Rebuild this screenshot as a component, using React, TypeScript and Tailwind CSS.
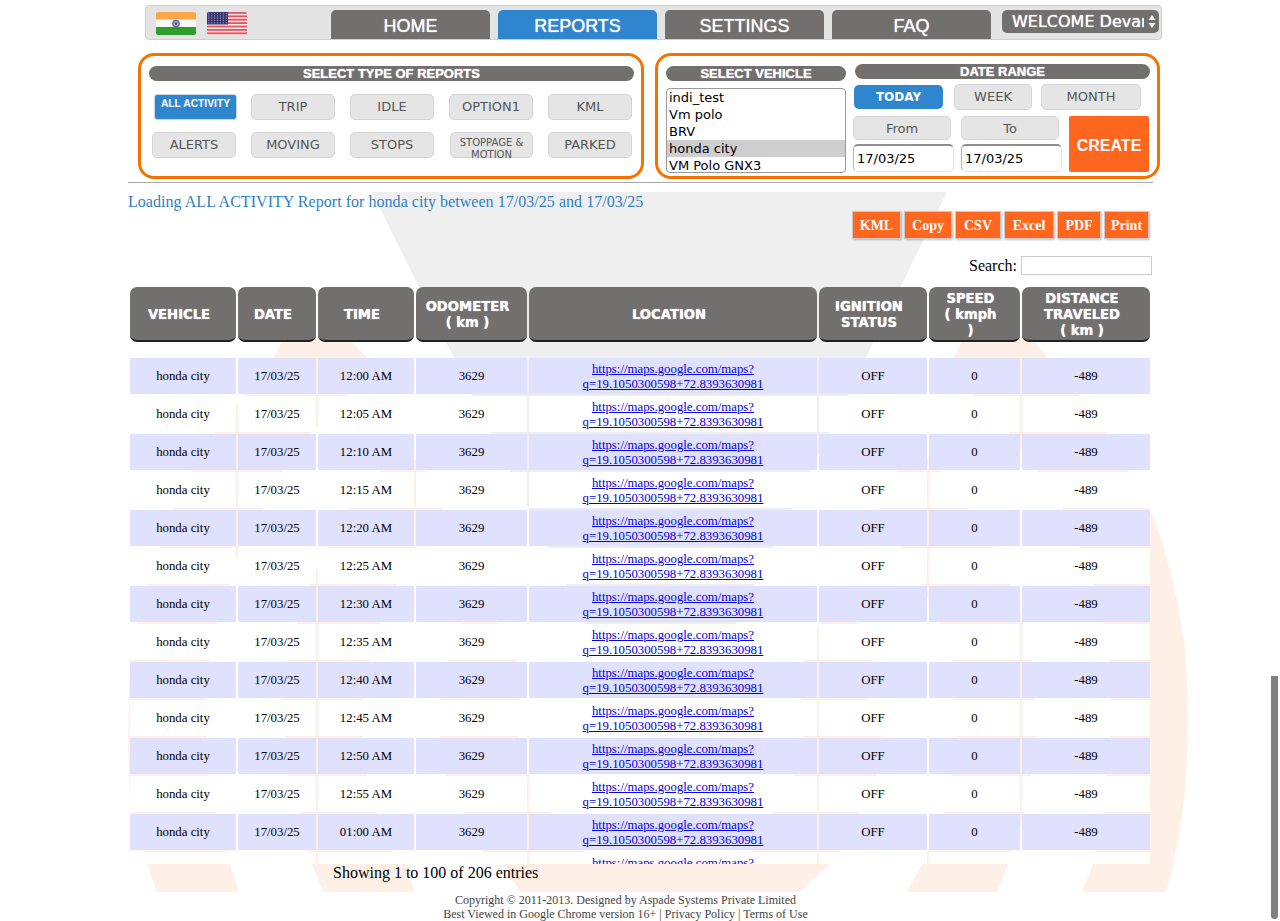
import React from "react";

// ── Table data ────────────────────────────────────────────────
const TIMES = [
  "12:00 AM", "12:05 AM", "12:10 AM", "12:15 AM", "12:20 AM", "12:25 AM", "12:30 AM",
  "12:35 AM", "12:40 AM", "12:45 AM", "12:50 AM", "12:55 AM", "01:00 AM", "01:05 AM",
];

const COLUMNS = [
  { label: ["VEHICLE"], width: "w-[106px]" },
  { label: ["DATE"], width: "w-[78px]" },
  { label: ["TIME"], width: "w-[96px]" },
  { label: ["ODOMETER", "( km )"], width: "w-[111px]" },
  { label: ["LOCATION"], width: "w-[288px]" },
  { label: ["IGNITION", "STATUS"], width: "w-[108px]" },
  { label: ["SPEED", "( kmph", ")"], width: "w-[91px]" },
  { label: ["DISTANCE", "TRAVELED", "( km )"], width: "w-[128px]" },
];

const REPORT_TYPES = [
  ["ALL ACTIVITY", "TRIP", "IDLE", "OPTION1", "KML"],
  ["ALERTS", "MOVING", "STOPS", "STOPPAGE & MOTION", "PARKED"],
];

const VEHICLES = ["indi_test", "Vm polo", "BRV", "honda city", "VM Polo GNX3"];
const EXPORTS = [
  { label: "KML", width: "w-[49px]" },
  { label: "Copy", width: "w-[48px]" },
  { label: "CSV", width: "w-[46px]" },
  { label: "Excel", width: "w-[50px]" },
  { label: "PDF", width: "w-[44px]" },
  { label: "Print", width: "w-[45px]" },
];

// ── Watermark logo behind the page ────────────────────────────
function Watermark() {
  return (
    <svg className="absolute inset-0 w-[1280px] h-[921px]" viewBox="0 0 1280 921" aria-hidden="true">
      <polygon fill="#efefef" points="372,192 947,192 735,625 586,625" />
      <g fill="#fef0e6">
        <polygon points="285,336 345,336 368,358 347,394 312,432 283,470 263,508 240,546 230,584 218,622 210,660 207,698 207,736 208,774 217,812 227,850 230,864 239,892 157,892 147,864 130,812 128,740 130,660 138,622 147,584 160,546 173,508 192,470 215,432 245,394 273,358" />
        <polygon points="405,450 425,470 443,508 417,546 397,584 380,622 370,660 363,698 363,736 367,774 377,812 392,850 405,864 415,892 323,892 312,864 307,850 300,812 288,774 285,736 283,698 287,660 297,622 310,584 327,546 350,508 381,470" />
        <polygon points="480,608 497,622 517,660 520,698 518,736 527,774 550,812 580,850 600,858 740,858 753,850 772,812 795,774 803,736 802,698 803,660 820,622 840,608 857,622 873,660 867,698 882,736 877,774 860,812 840,850 830,864 800,892 520,892 503,864 480,850 463,812 445,774 440,736 440,698 448,660 463,622" />
        <polygon points="918,450 940,470 968,508 993,546 1010,584 1023,622 1032,660 1037,736 1025,812 1008,864 997,892 907,892 922,864 945,812 958,736 952,660 940,622 920,584 900,546 878,508 897,470" />
        <polygon points="965,336 1030,336 1043,352 1078,394 1107,432 1128,470 1150,510 1160,535 1170,570 1178,605 1184,640 1187,680 1188,720 1187,760 1184,800 1178,840 1172,870 1166,892 1082,892 1093,864 1103,812 1110,736 1110,660 1103,622 1093,584 1078,546 1062,508 1037,470 1008,432 973,394 953,358" />
      </g>
    </svg>
  );
}

// ── Flags ─────────────────────────────────────────────────────
function IndiaFlag() {
  return (
    <svg width="40" height="23" viewBox="0 0 40 23" className="rounded-[2px] shrink-0">
      <rect width="40" height="8" fill="#fba748" />
      <rect y="7.5" width="40" height="8" fill="#f8f8f8" />
      <rect y="15" width="40" height="8" fill="#2f9e2c" />
      <circle cx="20" cy="11.5" r="3.4" fill="#9a9ac0" stroke="#5a5a96" strokeWidth="1" />
      <circle cx="20" cy="11.5" r="1" fill="#4a4a88" />
    </svg>
  );
}

function UsaFlag() {
  const stripes = [0, 1, 2, 3, 4, 5, 6];
  const dots: number[][] = [];
  for (let y = 0; y < 5; y++) for (let x = 0; x < 7; x++) dots.push([x, y]);
  return (
    <svg width="40" height="23" viewBox="0 0 40 23" className="rounded-[2px] shrink-0">
      <rect width="40" height="23" fill="#fbeaea" />
      {stripes.map((s) => (
        <rect key={s} y={s * 3.4} width="40" height="1.8" fill="#e8505c" />
      ))}
      <rect width="21" height="12.5" fill="#34346f" />
      {dots.map(([x, y]) => (
        <circle key={`${x}-${y}`} cx={1.8 + x * 2.9} cy={1.6 + y * 2.3} r="0.6" fill="#b4b4d4" />
      ))}
    </svg>
  );
}

// ── Small pieces ──────────────────────────────────────────────
function TitleBar({ children, className }: { children: React.ReactNode; className: string }) {
  return (
    <div
      className={`h-[15px] rounded-full bg-[#726f6f] text-white text-center text-[13px] font-bold leading-[15px] [font-family:'Liberation_Sans',sans-serif] [text-shadow:0_0_1px_#fff] ${className}`}
    >
      {children}
    </div>
  );
}

function NavTab({ label, active }: { label: string; active?: boolean }) {
  return (
    <button
      className={`w-[159px] h-[29px] rounded-t-[5px] text-white text-[18px] leading-[33px] text-center [font-family:'Liberation_Sans',sans-serif] [text-shadow:0_0_1px_#fff] ${
        active ? "bg-[#2f86cf]" : "bg-[#726f6f]"
      }`}
    >
      {label}
    </button>
  );
}

function GrayButton({ label, className }: { label: string; className: string }) {
  return (
    <button
      className={`block rounded-[5px] bg-[#e5e5e5] border border-[#d4d4d4] text-[#555] text-[13px] [font-family:'DejaVu_Sans',sans-serif] ${className}`}
    >
      {label}
    </button>
  );
}

export default function App() {
  return (
    <div className="relative w-[1280px] h-[921px] overflow-hidden bg-white">
      <Watermark />

      <div className="relative w-[1024px] mx-auto pt-[5px]">
        {/* ── Top nav ── */}
        <nav className="ml-[17px] w-[1017px] h-[35px] rounded-[4px] bg-[#e4e4e4] border border-[#cfcfcf] flex items-start">
          <div className="flex gap-[11px] ml-[10px] mt-[6px]">
            <IndiaFlag />
            <UsaFlag />
          </div>
          <div className="flex gap-[8px] ml-[84px] mt-[4px]">
            <NavTab label="HOME" />
            <NavTab label="REPORTS" active />
            <NavTab label="SETTINGS" />
            <NavTab label="FAQ" />
          </div>
          <div className="ml-[11px] mt-[4px] w-[157px] h-[23px] rounded-[5px] bg-[#726f6f] flex items-center pl-[10px] pr-[2px]">
            <span className="w-[132px] shrink-0 overflow-hidden whitespace-nowrap text-white text-[16px] leading-[25px] [font-family:'DejaVu_Sans',sans-serif] [text-shadow:0_0_1px_#fff]">
              WELCOME Devan
            </span>
            <svg width="10" height="15" viewBox="0 0 10 15" className="ml-[3px] shrink-0">
              <path d="M5 1 L8.5 6 H1.5 Z M5 14 L8.5 9 H1.5 Z" fill="#fff" />
            </svg>
          </div>
        </nav>

        {/* ── Filter panels ── */}
        <div className="flex gap-[11px] ml-[10px] mt-[13px]">
          <section className="shrink-0 w-[506px] h-[126px] rounded-[16px] border-[3px] border-[#f57200] pt-[10px] pl-[8px] pr-[7px]">
            <TitleBar className="w-full">SELECT TYPE OF REPORTS</TitleBar>
            <div className="grid grid-cols-[repeat(5,84px)] gap-x-[15px] gap-y-[12px] ml-[3px] mt-[13px]">
              {REPORT_TYPES.flat().map((label) => {
                if (label === "ALL ACTIVITY") {
                  return (
                    <button
                      key={label}
                      className="h-[26px] ml-[2px] w-[83px] rounded-[3px] bg-[#2f86cf] border border-[#c9d9e6] pb-[6px] text-white text-[10.3px] font-bold leading-[14px] [font-family:'Liberation_Sans',sans-serif]"
                    >
                      {label}
                    </button>
                  );
                }
                if (label === "STOPPAGE & MOTION") {
                  return (
                    <GrayButton
                      key={label}
                      label={label}
                      className="h-[26px] ml-[1px] !text-[10px] leading-[12px] px-[6px] pt-[4px]"
                    />
                  );
                }
                return <GrayButton key={label} label={label} className="h-[26px]" />;
              })}
            </div>
          </section>

          <section className="shrink-0 w-[505px] h-[126px] rounded-[16px] border-[3px] border-[#f57200] flex pl-[8px]">
            <div className="w-[180px] pt-[10px]">
              <TitleBar className="w-full">SELECT VEHICLE</TitleBar>
              <div className="mt-[7px] h-[85px] overflow-hidden rounded-[4px] border border-[#9a9a9a] bg-white">
                {VEHICLES.map((v) => (
                  <div
                    key={v}
                    className={`h-[17px] pl-[2px] text-[13px] leading-[17px] text-black [font-family:'DejaVu_Sans',sans-serif] ${
                      v === "honda city" ? "bg-[#cecece]" : ""
                    }`}
                  >
                    {v}
                  </div>
                ))}
              </div>
            </div>

            <div className="w-[297px] ml-[7px] pt-[8px]">
              <TitleBar className="w-[295px] ml-[2px]">DATE RANGE</TitleBar>
              <div className="flex mt-[6px] ml-[1px]">
                <button className="w-[89px] h-[24px] rounded-[5px] bg-[#2f86cf] text-white text-[12px] font-bold [font-family:'DejaVu_Sans',sans-serif]">
                  TODAY
                </button>
                <GrayButton label="WEEK" className="w-[78px] h-[26px] ml-[11px] -mt-[1px]" />
                <GrayButton label="MONTH" className="w-[100px] h-[26px] ml-[9px] -mt-[1px]" />
              </div>
              <div className="flex mt-[6px]">
                <div className="w-[108px]">
                  <GrayButton label="From" className="w-[98px] h-[24px] pt-[2px]" />
                  <input
                    readOnly
                    value="17/03/25"
                    className="block w-[101px] h-[28px] mt-[4px] pl-[3px] rounded-[5px] bg-white border border-[#e2e2e2] border-t-[2px] border-t-[#8f8f8f] border-l-[#b5b5b5] text-[13px] text-black [font-family:'DejaVu_Sans',sans-serif]"
                  />
                </div>
                <div className="w-[108px]">
                  <GrayButton label="To" className="w-[98px] h-[24px] pt-[2px]" />
                  <input
                    readOnly
                    value="17/03/25"
                    className="block w-[101px] h-[28px] mt-[4px] pl-[3px] rounded-[5px] bg-white border border-[#e2e2e2] border-t-[2px] border-t-[#8f8f8f] border-l-[#b5b5b5] text-[13px] text-black [font-family:'DejaVu_Sans',sans-serif]"
                  />
                </div>
                <button className="w-[80px] h-[56px] pt-[3px] rounded-[2px] bg-[#ff671f] text-white text-[16px] font-bold [font-family:'Liberation_Sans',sans-serif]">
                  CREATE
                </button>
              </div>
            </div>
          </section>
        </div>

        <div className="mt-[3px] w-[1025px] h-[1px] bg-[#a8a8a8]" />

        {/* ── Report heading + exports ── */}
        <p className="mt-[10px] h-[18px] text-[16px] leading-[18px] tracking-[0.04px] text-[#2f7fc4] [font-family:'Liberation_Serif',serif]">
          Loading ALL ACTIVITY Report for honda city between 17/03/25 and 17/03/25
        </p>

        <div className="flex justify-end gap-[3px] pr-[3px]">
          {EXPORTS.map((b) => (
            <button
              key={b.label}
              className={`${b.width} h-[28px] bg-[#ff671f] border border-[#c9c9c9] shadow-[1px_1px_2px_rgba(0,0,0,0.25)] text-white text-[14px] font-bold [font-family:'Liberation_Serif',serif]`}
            >
              {b.label}
            </button>
          ))}
        </div>

        <div className="flex justify-end items-center mt-[17px] h-[19px] [font-family:'Liberation_Serif',serif] text-[16px] text-black">
          <span>Search:</span>
          <input readOnly className="ml-[4px] w-[131px] h-[19px] bg-white border border-[#cccccc]" />
        </div>

        {/* ── Table head ── */}
        <table className="mt-[12px] table-fixed w-[1024px] border-separate border-spacing-x-[2px] border-spacing-y-0">
          <thead>
            <tr>
              {COLUMNS.map((c) => (
                <th
                  key={c.label[0]}
                  className={`${c.width} h-[55px] p-0 pr-[8px] pt-[2px] rounded-[7px] bg-[#726f6f] border-b-2 border-[#222] text-white text-center text-[13.2px] font-bold leading-[16px] [font-family:'DejaVu_Sans',sans-serif] [text-shadow:0_0_1px_#fff]`}
                >
                  {c.label.map((line) => (
                    <div key={line}>{line}</div>
                  ))}
                </th>
              ))}
            </tr>
          </thead>
        </table>

        <div className="mt-[14px] h-[508px] overflow-hidden">
          <table className="table-fixed w-[1024px] border-separate border-spacing-[2px] [font-family:'Liberation_Serif',serif] text-[12.8px] text-black text-center">
            <tbody>
              {TIMES.map((time, i) => {
                const rowBg = i % 2 === 0 ? "bg-[#e0e0ff]" : "bg-white";
                return (
                  <tr key={time} className={rowBg}>
                    <td className="w-[106px] h-[36px] p-0 pt-[2px]">honda city</td>
                    <td className="w-[78px] p-0 pt-[2px]">17/03/25</td>
                    <td className="w-[96px] p-0 pt-[2px]">{time}</td>
                    <td className="w-[111px] p-0 pt-[2px]">3629</td>
                    <td className="w-[288px] p-0 pt-[2px] leading-[15px]">
                      <a href="#" className="text-[#0000ee] underline">
                        https://maps.google.com/maps?
                        <br />
                        q=19.1050300598+72.8393630981
                      </a>
                    </td>
                    <td className="w-[108px] p-0 pt-[2px]">OFF</td>
                    <td className="w-[91px] p-0 pt-[2px]">0</td>
                    <td className="w-[128px] p-0 pt-[2px]">-489</td>
                  </tr>
                );
              })}
            </tbody>
          </table>
        </div>

        {/* ── Footer ── */}
        <p className="ml-[205px] h-[18px] text-[16px] leading-[18px] text-black [font-family:'Liberation_Serif',serif]">
          Showing 1 to 100 of 206 entries
        </p>
        <footer className="mt-[11px] ml-[194px] w-[607px] text-center text-[12px] leading-[14px] text-[#444] [font-family:'Liberation_Serif',serif]">
          <div>Copyright © 2011-2013. Designed by Aspade Systems Private Limited</div>
          <div>Best Viewed in Google Chrome version 16+ | Privacy Policy | Terms of Use</div>
        </footer>
      </div>

      {/* ── Overlay scrollbar thumb ── */}
      <div className="absolute left-[1271px] top-[676px] w-[7px] h-[243px] rounded-b-[4px] bg-[#808080]" />
    </div>
  );
}
